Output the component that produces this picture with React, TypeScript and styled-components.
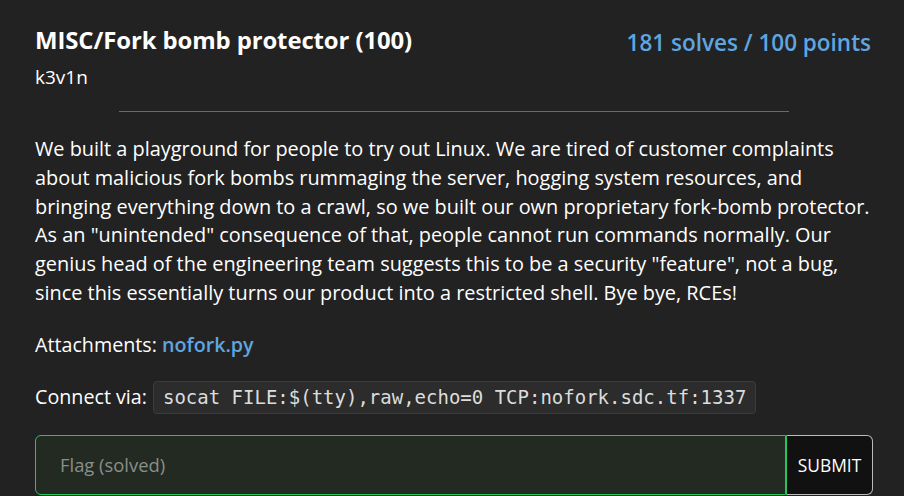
import React from "react";
import styled, { createGlobalStyle } from "styled-components";

const Global = createGlobalStyle`
  html, body { margin: 0; padding: 0; background: #222222; }
  body { font-family: "Open Sans", "Noto Sans", sans-serif; color: #ffffff; }
  * { box-sizing: border-box; }
`;

const Page = styled.div`
  width: 904px;
  height: 496px;
  overflow: hidden;
  background: #222222;
  padding: 24px 31px 0 35px;
`;

const Header = styled.div`
  display: flex;
  justify-content: space-between;
  align-items: flex-start;
`;

const TitleBlock = styled.div`
  display: flex;
  flex-direction: column;
`;

const Title = styled.h1`
  margin: 0;
  font-size: 23.9px;
  font-weight: 700;
  line-height: 32px;
  letter-spacing: -0.1px;
`;

const Author = styled.div`
  margin-top: 7px;
  font-size: 19px;
  line-height: 28px;
`;

const Stats = styled.div`
  margin-top: 3px;
  margin-right: 2px;
  font-size: 22.5px;
  font-weight: 600;
  color: #5fa6e0;
  line-height: 32px;
`;

const Rule = styled.hr`
  width: 80%;
  margin: 20px auto 23px;
  border: 0;
  border-top: 1px solid #6a6a6a;
`;

const Para = styled.p`
  margin: 0;
  font-size: 19.9px;
  line-height: 28.8px;
  white-space: nowrap;
`;

const Link = styled.a`
  color: #5fa6e0;
  font-weight: 600;
  text-decoration: none;
`;

const Code = styled.code`
  display: inline-block;
  font-family: "DejaVu Sans Mono", monospace;
  font-size: 19px;
  background: #2c2c2c;
  border: 1px solid #3c3c3c;
  border-radius: 4px;
  padding: 4px 9px;
  color: #dcdcdc;
  line-height: 23px;
`;

const Row = styled.div<{ $mt: number }>`
  margin-top: ${(p) => p.$mt}px;
  font-size: 19.7px;
  line-height: 30px;
  display: flex;
  align-items: center;
  gap: 6px;
`;

const Form = styled.form`
  margin-top: 21px;
  display: flex;
  height: 60px;
`;

const FlagInput = styled.input`
  flex: 1;
  background: #222a22;
  border: 1px solid #22c55e;
  border-radius: 6px 0 0 6px;
  padding: 0 24px;
  font-family: inherit;
  font-size: 18.4px;
  color: #fff;
  outline: none;
  &::placeholder { color: #8a8f8a; }
`;

const Submit = styled.button`
  width: 87px;
  background: #111111;
  color: #ffffff;
  border: 1px solid #bbbbbb;
  border-left: 1px solid #22c55e;
  border-radius: 0 6px 6px 0;
  font-family: inherit;
  font-size: 17.4px;
  padding: 0;
`;

export default function App() {
  return (
    <>
      <Global />
      <Page>
        <Header>
          <TitleBlock>
            <Title>MISC/Fork bomb protector (100)</Title>
            <Author>k3v1n</Author>
          </TitleBlock>
          <Stats>181 solves / 100 points</Stats>
        </Header>
        <Rule />
        <Para>
          We built a playground for people to try out Linux. We are tired of customer complaints
          <br />
          about malicious fork bombs rummaging the server, hogging system resources, and
          <br />
          bringing everything down to a crawl, so we built our own proprietary fork-bomb protector.
          <br />
          As an "unintended" consequence of that, people cannot run commands normally. Our
          <br />
          genius head of the engineering team suggests this to be a security "feature", not a bug,
          <br />
          since this essentially turns our product into a restricted shell. Bye bye, RCEs!
        </Para>
        <Row $mt={22}>
          <span>
            Attachments: <Link href="#">nofork.py</Link>
          </span>
        </Row>
        <Row $mt={21}>
          <span>Connect via:</span>
          <Code>socat FILE:$(tty),raw,echo=0 TCP:nofork.sdc.tf:1337</Code>
        </Row>
        <Form onSubmit={(e) => e.preventDefault()}>
          <FlagInput placeholder="Flag (solved)" disabled />
          <Submit type="submit">SUBMIT</Submit>
        </Form>
      </Page>
    </>
  );
}
